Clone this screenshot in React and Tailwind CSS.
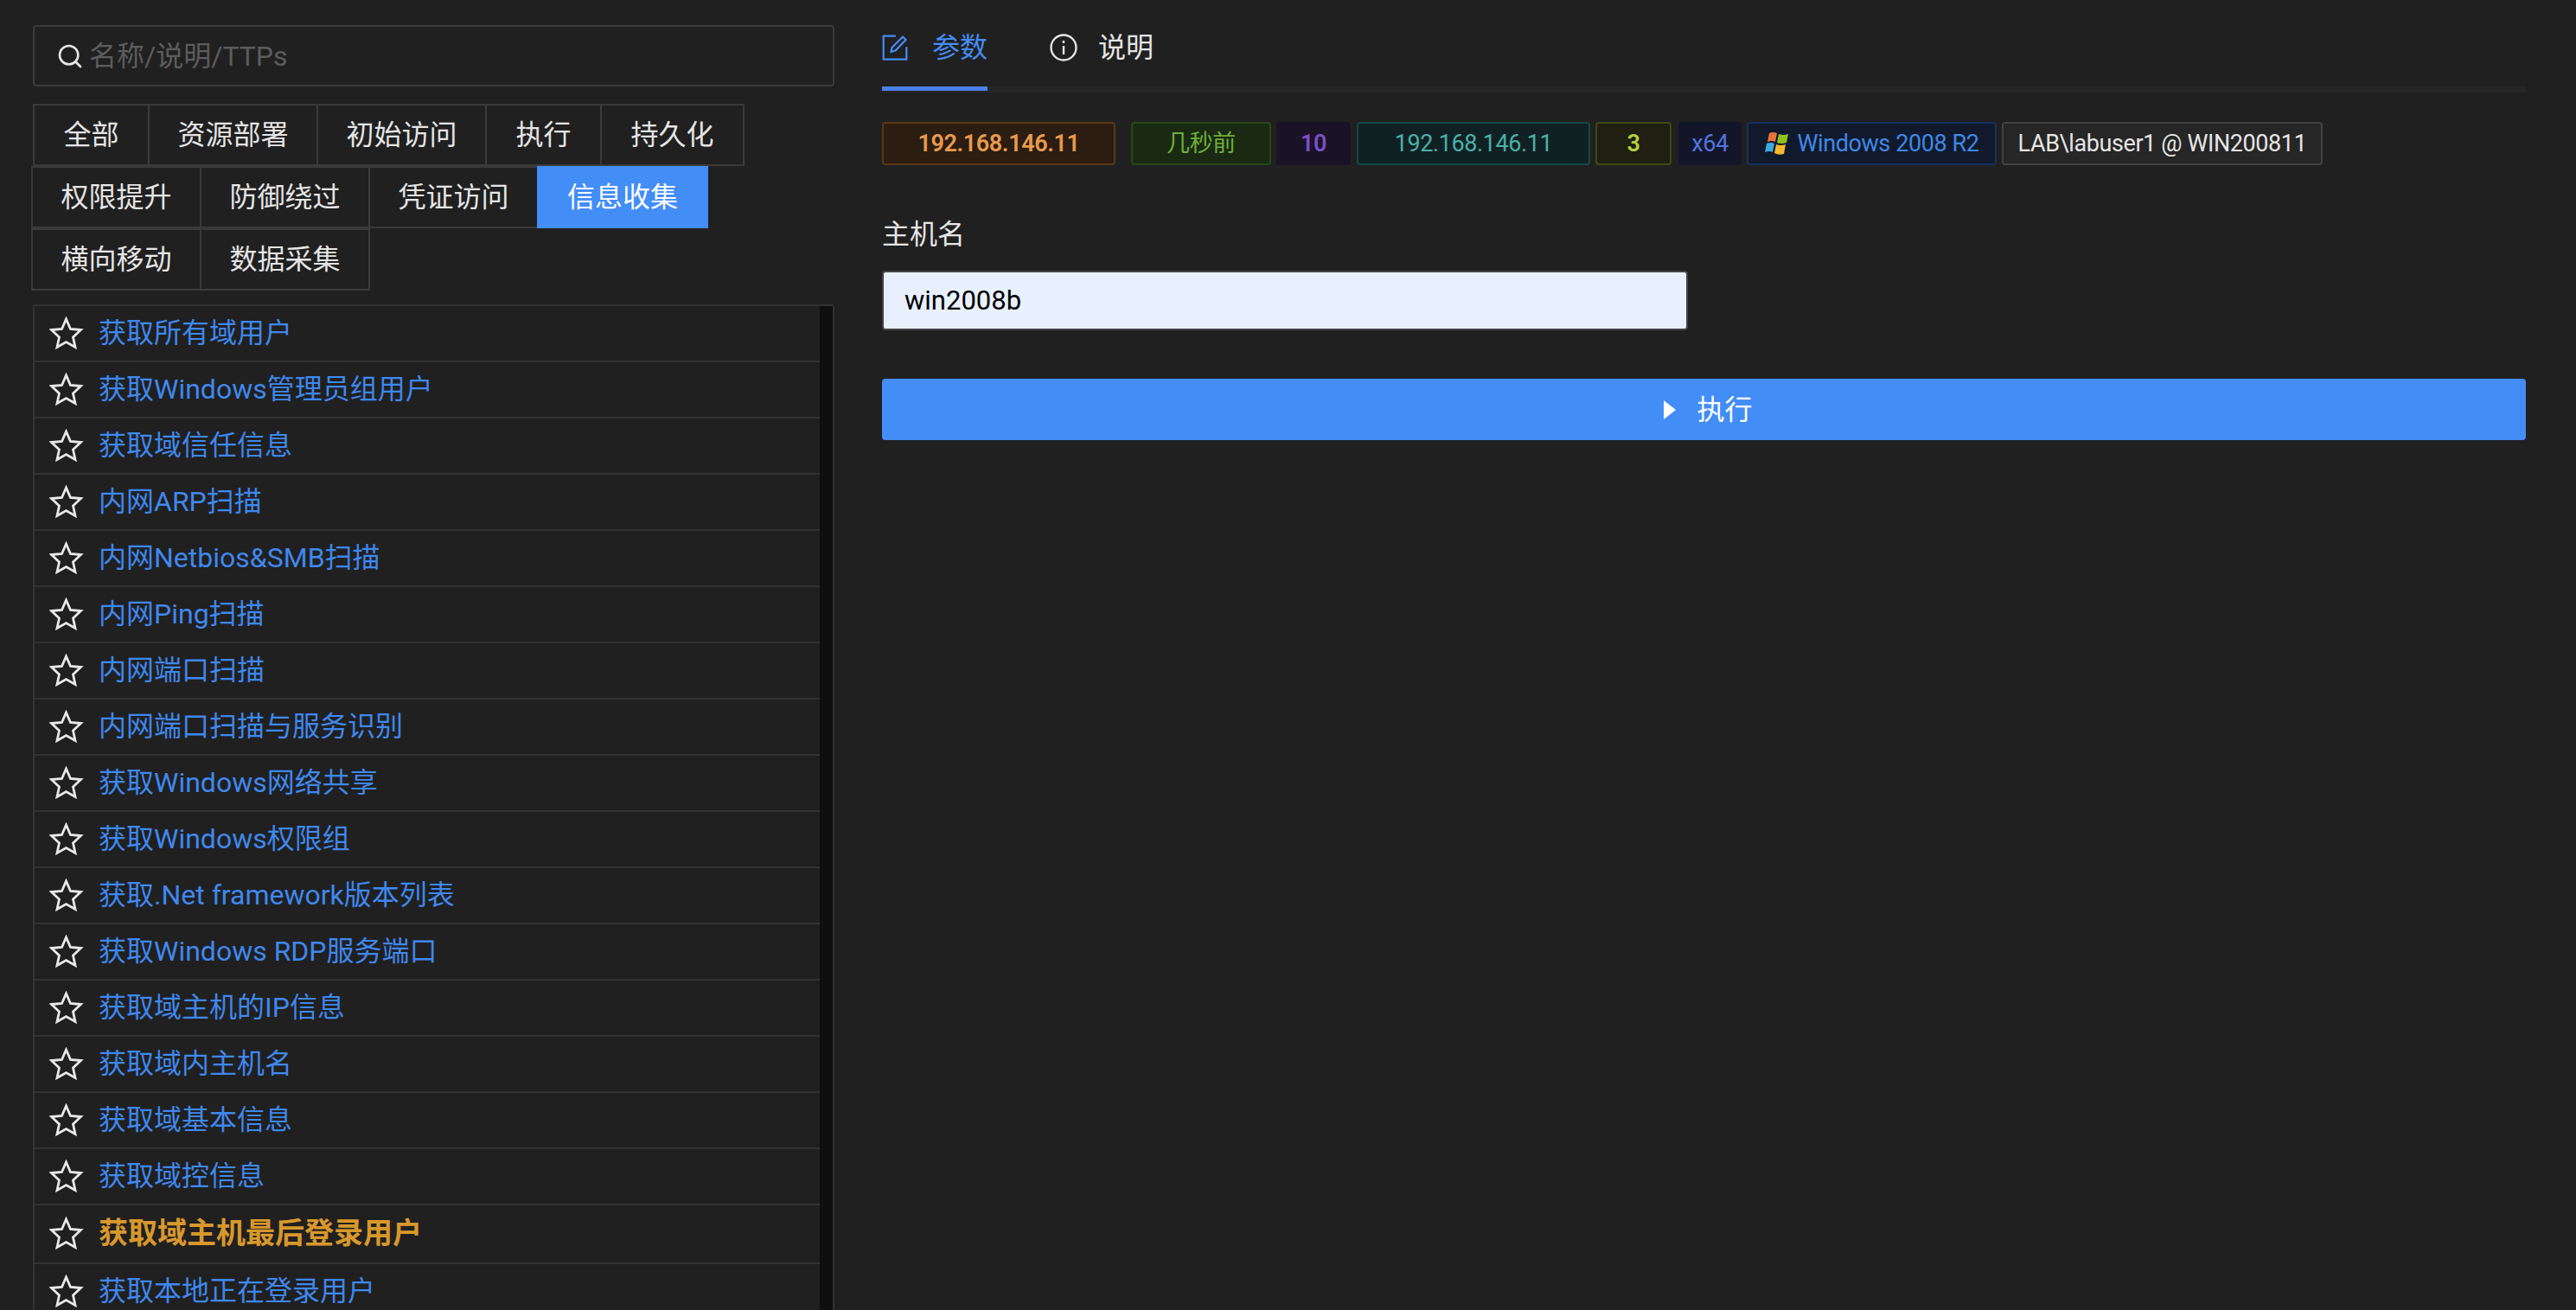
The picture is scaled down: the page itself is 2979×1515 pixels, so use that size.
import React from 'react';
import { Search } from 'lucide-react';

const rows = [
  ['全部', '资源部署', '初始访问', '执行', '持久化'],
  ['权限提升', '防御绕过', '凭证访问', '信息收集'],
  ['横向移动', '数据采集'],
];

const items = [
  '获取所有域用户', '获取Windows管理员组用户', '获取域信任信息', '内网ARP扫描',
  '内网Netbios&SMB扫描', '内网Ping扫描', '内网端口扫描', '内网端口扫描与服务识别',
  '获取Windows网络共享', '获取Windows权限组', '获取.Net framework版本列表',
  '获取Windows RDP服务端口', '获取域主机的IP信息', '获取域内主机名', '获取域基本信息',
  '获取域控信息', '获取域主机最后登录用户', '获取本地正在登录用户',
];

function StarIcon() {
  return (
    <svg viewBox="0 0 40 38" className="w-[40px] h-[38px] shrink-0">
      <path d="M19.5 3 L24.5 14.5 L36.5 15.5 L27.5 24 L30 35.5 L19.5 29.5 L9 35.5 L11.5 24 L2.5 15.5 L14.5 14.5 Z" fill="none" stroke="#e8e8e8" strokeWidth="2.8" strokeLinejoin="miter" />
    </svg>
  );
}

function WinLogo() {
  return (
    <svg viewBox="0 0 30 30" className="w-[30px] h-[30px] shrink-0 mr-[8px]">
      <path d="M6 3 Q10 1 15 3 L13 13 Q9 11 4 13 Z" fill="#e8743b" />
      <path d="M17 4 Q22 6 28 4 L26 14 Q20 16 15 14 Z" fill="#8fc31f" />
      <path d="M3 15 Q8 13 12 15 L10 25 Q6 23 1 25 Z" fill="#3fa9e0" />
      <path d="M14 16 Q19 18 25 16 L23 27 Q17 29 12 26 Z" fill="#f5b82e" />
    </svg>
  );
}

function Tag({ className, children }) {
  return (
    <span className={`h-[50px] flex items-center justify-center border-2 rounded-[4px] text-[27px] tracking-[-0.4px] shrink-0 ${className}`}>
      {children}
    </span>
  );
}

export default function App() {
  return (
    <div className="h-screen overflow-hidden flex bg-[#202020] text-[#e5e5e5] font-['Roboto','Noto_Sans_CJK_SC',sans-serif]">
      {/* Left column */}
      <div className="w-[927px] ml-[38px] mr-[55px] pt-[29px] shrink-0">
        <div className="h-[71px] flex items-center border-2 border-[#3a3a3a] rounded-[4px] pl-[25px]">
          <Search size={32} strokeWidth={2} className="text-[#e5e5e5] shrink-0" />
          <input
            placeholder="名称/说明/TTPs"
            className="ml-[6px] flex-1 bg-transparent outline-none text-[32px] placeholder:text-[#5c5c5c]"
          />
        </div>

        <div className="mt-[20px]">
          {rows.map((row, i) => (
            <div key={i} className={`flex h-[72px] ${i === 0 ? 'ml-[2px]' : ''}`}>
              {row.map((t) => (
                <div
                  key={t}
                  className={
                    t === '信息收集'
                      ? 'h-[72px] -ml-[2px] px-[35px] flex items-center bg-[#438df6] text-white text-[32px]'
                      : `h-[72px] -ml-[2px] flex items-center border-2 border-[#3a3a3a] text-[32px] ${t.length === 4 ? 'px-[32.5px]' : 'px-[33.5px]'}`
                  }
                >
                  {t}
                </div>
              ))}
            </div>
          ))}
        </div>

        <div className="mt-[16px] border-2 border-[#333333] border-b-0 rounded-t-[4px] flex h-[1300px]">
          <div className="flex-1">
            {items.map((t, i) => {
              const bold = t === '获取域主机最后登录用户';
              return (
                <div
                  key={t}
                  className={`flex items-center pl-[17px] pb-[2px] border-b-2 border-[#333333] ${bold ? 'h-[68px]' : 'h-[65px]'}`}
                >
                  <StarIcon />
                  <span className={`ml-[17px] whitespace-nowrap ${bold ? 'text-[34px] font-bold text-[#d8982c]' : 'text-[32px] text-[#3f88ee]'}`}>
                    {t}
                  </span>
                </div>
              );
            })}
          </div>
          <div className="w-[15px] bg-[#0f0f0f]" />
        </div>
      </div>

      {/* Right column */}
      <div className="w-[1901px] shrink-0">
        <div className="flex h-[107px] border-b-[7px] border-[#262626]">
          <div className="flex items-center h-[105px] pt-[10px] border-b-[5px] border-[#4a80e8] text-[#438df6] text-[32px]">
            <svg viewBox="0 0 30 30" className="w-[30px] h-[30px] mr-[28px]" fill="none" stroke="#438df6" strokeWidth="2.2">
              <path d="M16 1.7 H1.7 V28.7 H28.3 V14.3" />
              <path d="M24 2.5 L27.5 6 L15.5 18.5 L10.5 20 L11.5 15 Z" />
            </svg>
            参数
          </div>
          <div className="flex items-center h-[105px] pt-[10px] pb-[5px] ml-[72px] text-[32px]">
            <svg viewBox="0 0 32 32" className="w-[32px] h-[32px] mr-[24px]" fill="none" stroke="#e5e5e5" strokeWidth="2.4">
              <circle cx="16" cy="16" r="14.5" />
              <path d="M16 14 V24 M16 8 V11" />
            </svg>
            说明
          </div>
        </div>

        <div className="flex mt-[34px] gap-[6px]">
          <Tag className="w-[270px] mr-[12px] font-semibold bg-[#2b1d11] border-[#593815] text-[#e89a4c]">192.168.146.11</Tag>
          <Tag className="w-[162px] bg-[#1a2a12] border-[#274916] text-[#6fae3c]">几秒前</Tag>
          <Tag className="w-[86px] font-semibold bg-[#1a1325] border-[#1a1325] text-[#7a4fc8]">10</Tag>
          <Tag className="w-[270px] ml-[1px] bg-[#112123] border-[#144848] text-[#4bb0a8]">192.168.146.11</Tag>
          <Tag className="w-[88px] font-semibold bg-[#1f1f12] border-[#3e4a14] text-[#b5cf3c]">3</Tag>
          <Tag className="w-[73px] ml-[2px] bg-[#131629] border-[#131629] text-[#5273e0]">x64</Tag>
          <Tag className="w-[289px] bg-[#111a2c] border-[#15325b] text-[#3f88e8]">
            <WinLogo />
            Windows 2008 R2
          </Tag>
          <Tag className="w-[371px] bg-[#262626] border-[#424242] text-[#e5e5e5]">LAB\labuser1 @ WIN200811</Tag>
        </div>

        <div className="mt-[60px] text-[32px] leading-[40px]">主机名</div>
        <input
          readOnly
          value="win2008b"
          className="block mt-[22px] w-[932px] h-[69px] px-[24px] bg-[#e8f0fe] border-2 border-[#444444] rounded-[4px] text-[31px] text-black outline-none"
        />
        <button className="mt-[56px] w-full h-[71px] pl-[10px] flex items-center justify-center bg-[#438df6] rounded-[4px] text-white text-[32px]">
          <svg viewBox="0 0 14 22" className="w-[14px] h-[22px] mr-[24px]">
            <path d="M0 0 L14 11 L0 22 Z" fill="white" />
          </svg>
          执行
        </button>
      </div>
    </div>
  );
}
